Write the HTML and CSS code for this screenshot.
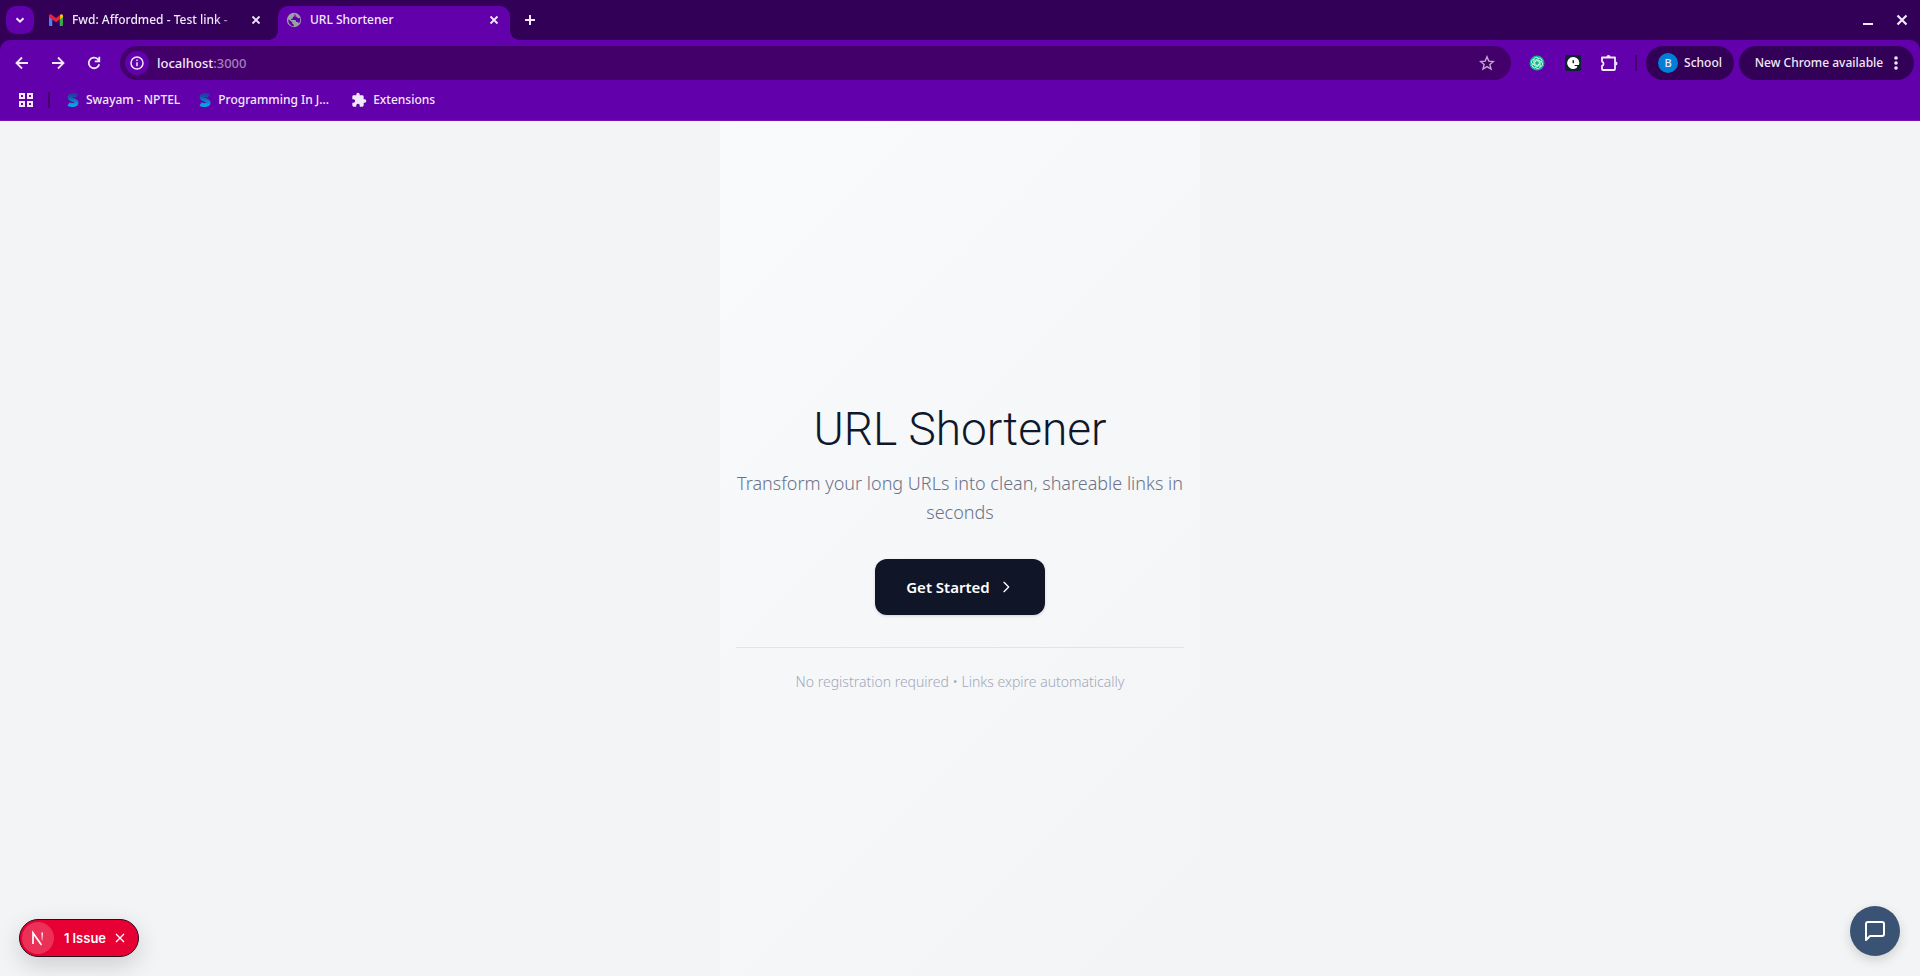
FILE: index.html
```html
<!DOCTYPE html>
<html lang="en">
<head>
<meta charset="utf-8">
<title>URL Shortener</title>
<link rel="stylesheet" href="styles.css">
</head>
<body>
<svg class="defs" aria-hidden="true">
  <defs>
    <linearGradient id="swayam-fill" x1="0" y1="0" x2="0" y2="1">
      <stop offset="0" stop-color="#1f3fa0"/>
      <stop offset="1" stop-color="#00a8e0"/>
    </linearGradient>
    <linearGradient id="next-fade" gradientUnits="userSpaceOnUse" x1="0" y1="3" x2="0" y2="13">
      <stop offset="0" stop-color="#fff"/>
      <stop offset="1" stop-color="#fff" stop-opacity="0"/>
    </linearGradient>
    <symbol id="close" viewBox="0 0 12 12"><path d="M2.500 2.500l7 7M9.500 2.500l-7 7" fill="none" stroke="currentColor" stroke-width="1.800"/></symbol>
    <symbol id="swayam" viewBox="0 0 14 16">
      <path d="M10.800 4C9.200 2.500 3.600 2.300 3.600 5.200c0 2.900 6.900 2.300 6.900 5.300 0 3.200-5.800 2.900-8 1.500" fill="none" stroke="url(#swayam-fill)" stroke-width="4"/>
    </symbol>
    <symbol id="puzzle" viewBox="0 0 24 24">
      <path d="M20.500 11H19V7c0-1.100-.9-2-2-2h-4V3.500a2.500 2.500 0 0 0-5 0V5H4c-1.100 0-2 .9-2 2v3.800h1.500a2.700 2.700 0 0 1 0 5.400H2V20c0 1.100.9 2 2 2h3.800v-1.500a2.700 2.700 0 0 1 5.400 0V22H17c1.100 0 2-.9 2-2v-4h1.500a2.500 2.500 0 0 0 0-5z"/>
    </symbol>
  </defs>
</svg>

<header class="browser">
  <div class="tab-strip">
    <button class="tab-search" aria-label="Search tabs"><svg width="12" height="12" viewBox="0 0 12 12"><path d="M2.500 4.200L6 7.700l3.500-3.500" fill="none" stroke="currentColor" stroke-width="2"/></svg></button>
    <div class="tab">
      <svg class="tab-icon" width="16" height="16" viewBox="0 0 16 16">
        <path d="M1 4.500l3.300 2.400V14H2a1 1 0 0 1-1-1z" fill="#4285f4"/>
        <path d="M15 4.500l-3.300 2.400V14H14a1 1 0 0 0 1-1z" fill="#34a853"/>
        <path d="M11.700 3.300l1-.8C13.700 1.800 15 2.400 15 3.700v1.500l-3.300 2.400z" fill="#fbbc04"/>
        <path d="M1 3.700c0-1.300 1.300-1.900 2.300-1.200L8 6l3.700-2.800v4.400L8 10.300 1 5.200z" fill="#ea1f3a"/>
      </svg>
      <span class="tab-title faded">Fwd: Affordmed - Test link -</span>
      <button class="tab-close" aria-label="Close tab"><svg width="12" height="12"><use href="#close"/></svg></button>
    </div>
    <div class="tab active">
      <svg class="tab-icon" width="16" height="16" viewBox="0 0 16 16">
        <circle cx="8" cy="8" r="7.200" fill="#9aa0a6"/>
        <path d="M2.300 7.300l3.900 3v1.300l1.500 1v2a6.600 6.600 0 0 1-5.400-7.300zM8.500 2.300v1.600L6.800 5.300v1.400H5.200v1.400h4.300l.8 1.900h1.600l1 1.500a6 6 0 0 0 1.200-5.500l-2.300.2-.9-1.400h-1.300V2.800z" fill="#6200ab"/>
      </svg>
      <span class="tab-title">URL Shortener</span>
      <button class="tab-close" aria-label="Close tab"><svg width="12" height="12"><use href="#close"/></svg></button>
    </div>
    <button class="new-tab" aria-label="New tab"><svg width="12" height="12" viewBox="0 0 12 12"><path d="M6 1v10M1 6h10" stroke="currentColor" stroke-width="2"/></svg></button>
    <div class="window-buttons">
      <button aria-label="Minimize"><svg width="14" height="14" viewBox="0 0 14 14"><path d="M2 11h10" stroke="currentColor" stroke-width="2"/></svg></button>
      <button aria-label="Close window"><svg width="14" height="14" viewBox="0 0 14 14"><path d="M2.500 2.500l9 9M11.500 2.500l-9 9" stroke="currentColor" stroke-width="2.200"/></svg></button>
    </div>
  </div>

  <div class="chrome-body">
    <div class="toolbar">
      <button class="nav-button" aria-label="Back"><svg width="16" height="16" viewBox="0 0 16 16"><path d="M14 8H3M8 2.500L2.500 8 8 13.500"/></svg></button>
      <button class="nav-button" aria-label="Forward"><svg width="16" height="16" viewBox="0 0 16 16"><path d="M2 8h11M8 2.500L13.500 8 8 13.500"/></svg></button>
      <button class="nav-button" aria-label="Reload"><svg width="16" height="16" viewBox="0 0 16 16"><path d="M13.200 9.200A5.300 5.300 0 1 1 11.800 4.200L13 5.500M13.300 1.800v4.500H8.800"/></svg></button>
      <div class="omnibox">
        <button class="site-info" aria-label="Site information"><svg width="14" height="14" viewBox="0 0 14 14"><circle cx="7" cy="7" r="6" fill="none" stroke="currentColor" stroke-width="1.500"/><path d="M7 6.200v4M7 3.600v1.500" stroke="currentColor" stroke-width="1.500"/></svg></button>
        <span class="url">localhost<span class="port">:3000</span></span>
        <button class="star" aria-label="Bookmark this tab"><svg width="16" height="16" viewBox="0 0 16 16"><path d="M8 1.800l1.800 4.300 4.600.4-3.500 3 1.100 4.600L8 11.600l-4 2.500 1.100-4.600-3.500-3 4.600-.4z" fill="none" stroke="currentColor" stroke-width="1.400"/></svg></button>
      </div>
      <div class="extensions">
        <button aria-label="ChatGPT extension"><svg width="16" height="16" viewBox="0 0 16 16"><circle cx="8" cy="8" r="7.500" fill="#0fb58a"/><g fill="none" stroke="#d8fff2" stroke-width=".8"><path id="petal" d="M8 10.500L4.800 8.700V5.200a2.600 2.600 0 0 1 4.900-1.500"/><use href="#petal" transform="rotate(60 8 8)"/><use href="#petal" transform="rotate(120 8 8)"/><use href="#petal" transform="rotate(180 8 8)"/><use href="#petal" transform="rotate(240 8 8)"/><use href="#petal" transform="rotate(300 8 8)"/></g></svg></button>
        <button aria-label="Reader extension"><svg width="16" height="16" viewBox="0 0 16 16"><rect width="16" height="16" rx="2" fill="#0c2430"/><path d="M8.200 2A6 6 0 1 0 11.500 13c1-.6 1-1.500.3-2.100H9.600v-.8h4.300A6 6 0 0 0 8.200 2z" fill="#fff"/><path d="M8.300 5.200v3" stroke="#0c2430" stroke-width="1.500"/></svg></button>
        <button aria-label="Extensions"><svg width="18" height="18" viewBox="0 0 18 18"><path d="M2 3.500h13V15a1 1 0 0 1-1 1H3a1 1 0 0 1-1-1v-3.200a2.200 2.200 0 0 0 0-4.200z" fill="none" stroke="currentColor" stroke-width="1.800" stroke-linejoin="round"/><path d="M6.500 3a2 2 0 0 1 4 0zM15.500 7.500a2 2 0 0 1 0 4z" fill="currentColor"/></svg></button>
      </div>
      <span class="divider"></span>
      <button class="pill profile"><span class="avatar">B</span>School</button>
      <button class="pill update">New Chrome available<svg width="4" height="16" viewBox="0 0 4 16" fill="currentColor"><circle cx="2" cy="3" r="1.800"/><circle cx="2" cy="8" r="1.800"/><circle cx="2" cy="13" r="1.800"/></svg></button>
    </div>

    <nav class="bookmarks" aria-label="Bookmarks">
      <button class="apps" aria-label="Apps"><svg width="14" height="14" viewBox="0 0 14 14"><path d="M1 1h4v4H1zM9 1h4v4H9zM1 9h4v4H1zM9 9h4v4H9z" fill="none" stroke="currentColor" stroke-width="2"/></svg></button>
      <span class="divider"></span>
      <a class="bookmark" href="#"><svg width="14" height="16"><use href="#swayam"/></svg>Swayam - NPTEL</a>
      <a class="bookmark" href="#"><svg width="14" height="16"><use href="#swayam"/></svg>Programming In J...</a>
      <a class="bookmark extension-link" href="#"><svg width="16" height="16" fill="currentColor"><use href="#puzzle"/></svg>Extensions</a>
    </nav>
  </div>
</header>

<div class="page">
  <main class="panel">
    <h1 class="title">URL Shortener</h1>
    <p class="subtitle">Transform your long URLs into clean, shareable links in seconds</p>
    <a class="cta" href="#">Get Started<svg width="16" height="16" viewBox="0 0 24 24"><path d="M9 5l7 7-7 7" fill="none" stroke="currentColor" stroke-width="2" stroke-linecap="round" stroke-linejoin="round"/></svg></a>
    <p class="note">No registration required • Links expire automatically</p>
  </main>

  <div class="issue-badge">
    <button class="issue-logo" aria-label="Open dev tools"><svg width="16" height="16" viewBox="0 0 16 16"><path d="M3 14V3l8.500 12" fill="none" stroke="#fff" stroke-width="1.700"/><path d="M12.200 2.500v8" stroke="url(#next-fade)" stroke-width="1.500"/></svg></button>
    <button class="issue-text"><span>1</span><span>Issue</span></button>
    <button class="issue-close" aria-label="Dismiss"><svg width="12" height="12" viewBox="0 0 12 12"><path d="M2 2l8 8M10 2l-8 8" stroke="currentColor" stroke-width="1.300"/></svg></button>
  </div>

  <button class="chat" aria-label="Open chat"><svg width="24" height="24" viewBox="0 0 24 24"><path d="M21 15a2 2 0 0 1-2 2H7l-4 4V5a2 2 0 0 1 2-2h14a2 2 0 0 1 2 2z" fill="none" stroke="currentColor" stroke-width="2" stroke-linecap="round" stroke-linejoin="round"/></svg></button>
</div>
</body>
</html>
```
FILE: styles.css
```css
* { box-sizing: border-box; }

:root {
  --strip: #320057;
  --bar: #6200ab;
  --field: #43006b;
  --text: #f1e9f8;
  --ui-font: "Noto Sans", "Open Sans", sans-serif;
}

body {
  margin: 0;
  min-height: 100vh;
  display: flex;
  flex-direction: column;
  font-family: var(--ui-font);
}

svg { display: block; flex: none; }
.defs { position: absolute; width: 0; height: 0; }

button {
  display: flex;
  align-items: center;
  justify-content: center;
  margin: 0;
  padding: 0;
  border: 0;
  background: none;
  color: inherit;
  font: inherit;
  cursor: pointer;
}

a { color: inherit; text-decoration: none; }

/* Browser frame */
.browser {
  background: var(--strip);
  color: var(--text);
  font-size: 12px;
  font-weight: 500;
  line-height: 16px;
}

.tab-strip {
  display: flex;
  align-items: flex-end;
  height: 40px;
  padding: 0 6px;
}

.tab-search {
  width: 28px;
  height: 28px;
  margin-bottom: 6px;
  border-radius: 10px;
  background: var(--bar);
}

.tab {
  position: relative;
  display: flex;
  align-items: center;
  gap: 8px;
  width: 232px;
  height: 34px;
  padding: 0 10px 6px 8px;
}
.tab-search + .tab { margin-left: 6px; }
.tab.active {
  margin-left: 6px;
  border-radius: 10px 10px 0 0;
  background: var(--bar);
}
.tab.active::before,
.tab.active::after {
  content: "";
  position: absolute;
  bottom: 0;
  width: 10px;
  height: 10px;
}
.tab.active::before {
  right: 100%;
  background: radial-gradient(circle at 0 0, transparent 10px, var(--bar) 10px);
}
.tab.active::after {
  left: 100%;
  background: radial-gradient(circle at 100% 0, transparent 10px, var(--bar) 10px);
}
.tab-title {
  flex: 1;
  white-space: nowrap;
}
.faded {
  -webkit-mask-image: linear-gradient(90deg, #000 84%, transparent 100%);
  mask-image: linear-gradient(90deg, #000 84%, transparent 100%);
}
.new-tab { width: 28px; height: 28px; margin: 0 0 6px 6px; }
.window-buttons {
  display: flex;
  gap: 20px;
  height: 28px;
  margin: 0 5px 6px auto;
}

.chrome-body {
  border-radius: 10px 10px 0 0;
  border-bottom: 1px solid #7d10b8;
  background: var(--bar);
}

.toolbar {
  display: flex;
  align-items: center;
  padding: 6px 6px 0 8px;
}
.nav-button { width: 28px; height: 28px; margin-right: 8px; }
.nav-button path { fill: none; stroke: currentColor; stroke-width: 1.8; }

.omnibox {
  flex: 1;
  display: flex;
  align-items: center;
  gap: 8px;
  height: 34px;
  margin-left: 4px;
  padding: 0 16px 0 5px;
  border-radius: 17px;
  background: var(--field);
}
.site-info { width: 24px; height: 24px; border-radius: 50%; background: var(--bar); }
.url { flex: 1; font-size: 13px; }
.port { color: #a27fba; }
.star { color: #bfaacb; }

.extensions { display: flex; gap: 8px; margin: 0 12px; }
.extensions button { width: 28px; height: 28px; }
.divider { width: 2px; height: 16px; background: #43006b; }

.pill {
  height: 34px;
  border-radius: 17px;
  background: var(--strip);
}
.profile { gap: 6px; width: 88px; margin: 0 5px 0 9px; }
.avatar {
  width: 20px;
  border-radius: 50%;
  background: #0080d4;
  font-size: 11px;
  line-height: 20px;
}
.update { gap: 11px; width: 175px; }

.bookmarks {
  display: flex;
  align-items: center;
  gap: 18px;
  height: 40px;
  padding: 0 18px;
}
.apps { margin: 0 -3px 0 1px; }
.bookmark { display: flex; align-items: center; gap: 6px; }
.divider + .bookmark { margin-left: -2px; }
.extension-link { margin-left: 4px; }

/* Page */
.page {
  position: relative;
  flex: 1;
  display: flex;
  justify-content: center;
  background: #f3f4f6;
}

.panel {
  display: flex;
  flex-direction: column;
  align-items: center;
  justify-content: center;
  width: 100%;
  max-width: 480px;
  padding: 0 16px;
  background: linear-gradient(135deg, #f8fafc, #f3f4f6);
  text-align: center;
}

.title {
  margin: 0 0 16px;
  color: #0f172a;
  font-family: Roboto, "Noto Sans", sans-serif;
  font-size: 46px;
  font-weight: 300;
  line-height: 48px;
}
.subtitle {
  margin: 0 0 32px;
  color: #6b7288;
  font-size: 18px;
  font-weight: 300;
  line-height: 29px;
}
.cta {
  display: flex;
  align-items: center;
  gap: 8px;
  height: 56px;
  padding: 0 31px;
  border-radius: 12px;
  background: #101628;
  box-shadow: 0 1px 3px rgb(0 0 0 / 15%);
  color: #fff;
  font-size: 15px;
  font-weight: 600;
}
.note {
  align-self: stretch;
  margin: 32px 0 0;
  padding-top: 24px;
  border-top: 1px solid #e2e4e9;
  color: #a2a8b8;
  font-size: 14px;
  font-weight: 300;
  line-height: 20px;
}

.issue-badge {
  position: absolute;
  bottom: 19px;
  left: 19px;
  display: flex;
  align-items: center;
  height: 38px;
  padding: 0 12px 0 2px;
  border: 1px solid #2b0d1c;
  border-radius: 19px;
  background: #e60033;
  box-shadow: 0 8px 24px rgb(0 0 0 / 16%);
  color: #fff;
  font-family: Inter, sans-serif;
  font-size: 13px;
  font-weight: 600;
}
.issue-logo { width: 32px; height: 32px; border-radius: 50%; background: #eb3158; }
.issue-text { gap: 3px; margin: 0 8px 0 10px; }

.chat {
  position: absolute;
  right: 20px;
  bottom: 20px;
  width: 50px;
  height: 50px;
  border-radius: 50%;
  background: #3a5273;
  box-shadow: 0 4px 12px rgb(0 0 0 / 15%);
  color: #fff;
}
```
